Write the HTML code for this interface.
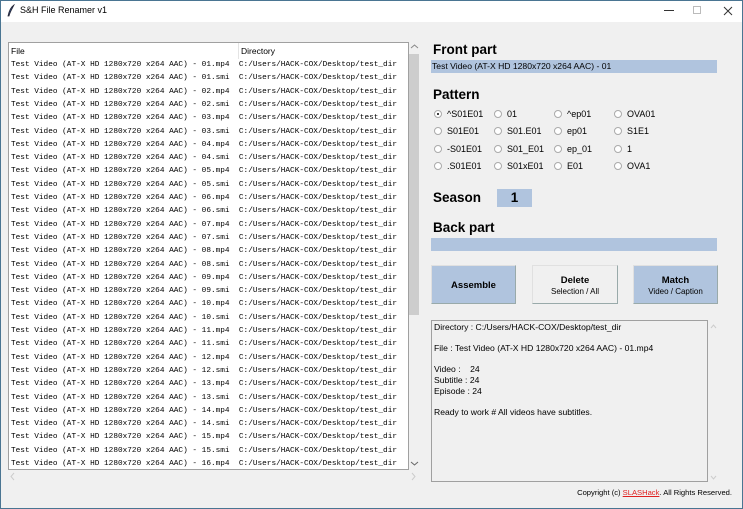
<!DOCTYPE html>
<html><head><meta charset="utf-8"><style>
*{margin:0;padding:0;box-sizing:border-box}
body{width:743px;height:509px;overflow:hidden;background:#f0f0f0;font-family:"Liberation Sans",sans-serif;position:relative}
.abs{position:absolute}
#frame{left:0;top:0;width:743px;height:509px;border:1px solid #4a7592;pointer-events:none}
#title{left:1px;top:1px;width:741px;height:21px;background:#fff}
#title .t{left:19px;top:4px;font-size:9px;color:#000}
#list{left:8px;top:42px;width:401px;height:428px;background:#fff;border:1px solid #a0a0a0;overflow:hidden}
.row{position:absolute;left:2px;font-family:"Liberation Mono",monospace;font-size:7.75px;color:#000;white-space:pre;line-height:10px}
.hdr{position:absolute;font-size:8.5px;top:3px;color:#000}
.lbl{font-weight:bold;font-size:13.5px;color:#000}
.ent{background:#b0c4de;height:13px}
.rad{font-size:9px;color:#000;white-space:pre}
.rad i{display:inline-block;width:8px;height:8px;border:1px solid #aaa;border-radius:50%;background:#fff;vertical-align:-1px;margin-right:5px;position:relative}
.rad i.on:after{content:"";position:absolute;left:2px;top:2px;width:2px;height:2px;background:#000;border-radius:50%}
.btn{border:1px solid #e0e0e0;border-right-color:#9aa;border-bottom-color:#9aa;text-align:center;font-size:9px}
.btn b{font-size:9.5px}
#txt{left:431px;top:320px;width:277px;height:162px;border:1px solid #a0a0a0;background:#f0f0f0;font-size:8.6px;line-height:10.6px;padding:1px 2px;white-space:pre}
</style></head><body>
<div id="title" class="abs">
<svg class="abs" style="left:5px;top:3px" width="10" height="14"><path d="M8 1 C5 3 3 7 2 12 L3 12 C4 8 6 5 8 1Z" fill="#3a5a8a" stroke="#223" stroke-width="0.8"/></svg>
<div class="abs t">S&amp;H File Renamer v1</div>
<div class="abs" style="left:663px;top:9px;width:10px;height:1px;background:#333"></div>
<div class="abs" style="left:692px;top:5px;width:8px;height:8px;border:1px solid #bbb"></div>
<svg class="abs" style="left:722px;top:5px" width="10" height="10"><path d="M1 1L9 9M9 1L1 9" stroke="#333" stroke-width="1"/></svg>
</div>
<div id="list" class="abs">
<div class="hdr" style="left:2px">File</div>
<div class="abs" style="left:229px;top:0;width:1px;height:16px;background:#e4e4e4"></div>
<div class="hdr" style="left:232px">Directory</div>
<div class="row" style="top:17px">Test Video (AT-X HD 1280x720 x264 AAC) - 01.mp4  C:/Users/HACK-COX/Desktop/test_dir</div>
<div class="row" style="top:30.3px">Test Video (AT-X HD 1280x720 x264 AAC) - 01.smi  C:/Users/HACK-COX/Desktop/test_dir</div>
<div class="row" style="top:43.6px">Test Video (AT-X HD 1280x720 x264 AAC) - 02.mp4  C:/Users/HACK-COX/Desktop/test_dir</div>
<div class="row" style="top:56.9px">Test Video (AT-X HD 1280x720 x264 AAC) - 02.smi  C:/Users/HACK-COX/Desktop/test_dir</div>
<div class="row" style="top:70.2px">Test Video (AT-X HD 1280x720 x264 AAC) - 03.mp4  C:/Users/HACK-COX/Desktop/test_dir</div>
<div class="row" style="top:83.5px">Test Video (AT-X HD 1280x720 x264 AAC) - 03.smi  C:/Users/HACK-COX/Desktop/test_dir</div>
<div class="row" style="top:96.8px">Test Video (AT-X HD 1280x720 x264 AAC) - 04.mp4  C:/Users/HACK-COX/Desktop/test_dir</div>
<div class="row" style="top:110.1px">Test Video (AT-X HD 1280x720 x264 AAC) - 04.smi  C:/Users/HACK-COX/Desktop/test_dir</div>
<div class="row" style="top:123.4px">Test Video (AT-X HD 1280x720 x264 AAC) - 05.mp4  C:/Users/HACK-COX/Desktop/test_dir</div>
<div class="row" style="top:136.7px">Test Video (AT-X HD 1280x720 x264 AAC) - 05.smi  C:/Users/HACK-COX/Desktop/test_dir</div>
<div class="row" style="top:150px">Test Video (AT-X HD 1280x720 x264 AAC) - 06.mp4  C:/Users/HACK-COX/Desktop/test_dir</div>
<div class="row" style="top:163.3px">Test Video (AT-X HD 1280x720 x264 AAC) - 06.smi  C:/Users/HACK-COX/Desktop/test_dir</div>
<div class="row" style="top:176.6px">Test Video (AT-X HD 1280x720 x264 AAC) - 07.mp4  C:/Users/HACK-COX/Desktop/test_dir</div>
<div class="row" style="top:189.9px">Test Video (AT-X HD 1280x720 x264 AAC) - 07.smi  C:/Users/HACK-COX/Desktop/test_dir</div>
<div class="row" style="top:203.2px">Test Video (AT-X HD 1280x720 x264 AAC) - 08.mp4  C:/Users/HACK-COX/Desktop/test_dir</div>
<div class="row" style="top:216.5px">Test Video (AT-X HD 1280x720 x264 AAC) - 08.smi  C:/Users/HACK-COX/Desktop/test_dir</div>
<div class="row" style="top:229.8px">Test Video (AT-X HD 1280x720 x264 AAC) - 09.mp4  C:/Users/HACK-COX/Desktop/test_dir</div>
<div class="row" style="top:243.1px">Test Video (AT-X HD 1280x720 x264 AAC) - 09.smi  C:/Users/HACK-COX/Desktop/test_dir</div>
<div class="row" style="top:256.4px">Test Video (AT-X HD 1280x720 x264 AAC) - 10.mp4  C:/Users/HACK-COX/Desktop/test_dir</div>
<div class="row" style="top:269.7px">Test Video (AT-X HD 1280x720 x264 AAC) - 10.smi  C:/Users/HACK-COX/Desktop/test_dir</div>
<div class="row" style="top:283px">Test Video (AT-X HD 1280x720 x264 AAC) - 11.mp4  C:/Users/HACK-COX/Desktop/test_dir</div>
<div class="row" style="top:296.3px">Test Video (AT-X HD 1280x720 x264 AAC) - 11.smi  C:/Users/HACK-COX/Desktop/test_dir</div>
<div class="row" style="top:309.6px">Test Video (AT-X HD 1280x720 x264 AAC) - 12.mp4  C:/Users/HACK-COX/Desktop/test_dir</div>
<div class="row" style="top:322.9px">Test Video (AT-X HD 1280x720 x264 AAC) - 12.smi  C:/Users/HACK-COX/Desktop/test_dir</div>
<div class="row" style="top:336.2px">Test Video (AT-X HD 1280x720 x264 AAC) - 13.mp4  C:/Users/HACK-COX/Desktop/test_dir</div>
<div class="row" style="top:349.5px">Test Video (AT-X HD 1280x720 x264 AAC) - 13.smi  C:/Users/HACK-COX/Desktop/test_dir</div>
<div class="row" style="top:362.8px">Test Video (AT-X HD 1280x720 x264 AAC) - 14.mp4  C:/Users/HACK-COX/Desktop/test_dir</div>
<div class="row" style="top:376.1px">Test Video (AT-X HD 1280x720 x264 AAC) - 14.smi  C:/Users/HACK-COX/Desktop/test_dir</div>
<div class="row" style="top:389.4px">Test Video (AT-X HD 1280x720 x264 AAC) - 15.mp4  C:/Users/HACK-COX/Desktop/test_dir</div>
<div class="row" style="top:402.7px">Test Video (AT-X HD 1280x720 x264 AAC) - 15.smi  C:/Users/HACK-COX/Desktop/test_dir</div>
<div class="row" style="top:416px">Test Video (AT-X HD 1280x720 x264 AAC) - 16.mp4  C:/Users/HACK-COX/Desktop/test_dir</div>
</div>
<svg class="abs" style="left:410px;top:44px" width="9" height="6"><path d="M1 4L4.5 1L8 4" stroke="#888" fill="none"/></svg>
<div class="abs" style="left:409px;top:54px;width:10px;height:261px;background:#cdcdcd"></div>
<svg class="abs" style="left:410px;top:461px" width="9" height="6"><path d="M1 1L4.5 4L8 1" stroke="#666" fill="none"/></svg>
<svg class="abs" style="left:10px;top:472px" width="6" height="9"><path d="M4 1L1 4.5L4 8" stroke="#ccc" fill="none"/></svg>
<svg class="abs" style="left:411px;top:472px" width="6" height="9"><path d="M1 1L4 4.5L1 8" stroke="#ccc" fill="none"/></svg>

<div class="abs lbl" style="left:433px;top:42px">Front part</div>
<div class="abs ent" style="left:431px;top:60px;width:286px;font-size:8.6px;line-height:13px;padding-left:1px">Test Video (AT-X HD 1280x720 x264 AAC) - 01</div>
<div class="abs lbl" style="left:433px;top:87px">Pattern</div>
<div class="abs rad" style="left:434px;top:109px"><i class="on"></i>^S01E01</div>
<div class="abs rad" style="left:494px;top:109px"><i></i>01</div>
<div class="abs rad" style="left:554px;top:109px"><i></i>^ep01</div>
<div class="abs rad" style="left:614px;top:109px"><i></i>OVA01</div>
<div class="abs rad" style="left:434px;top:126px"><i></i>S01E01</div>
<div class="abs rad" style="left:494px;top:126px"><i></i>S01.E01</div>
<div class="abs rad" style="left:554px;top:126px"><i></i>ep01</div>
<div class="abs rad" style="left:614px;top:126px"><i></i>S1E1</div>
<div class="abs rad" style="left:434px;top:144px"><i></i>-S01E01</div>
<div class="abs rad" style="left:494px;top:144px"><i></i>S01_E01</div>
<div class="abs rad" style="left:554px;top:144px"><i></i>ep_01</div>
<div class="abs rad" style="left:614px;top:144px"><i></i>1</div>
<div class="abs rad" style="left:434px;top:161px"><i></i>.S01E01</div>
<div class="abs rad" style="left:494px;top:161px"><i></i>S01xE01</div>
<div class="abs rad" style="left:554px;top:161px"><i></i>E01</div>
<div class="abs rad" style="left:614px;top:161px"><i></i>OVA1</div>
<div class="abs lbl" style="left:433px;top:190px">Season</div>
<div class="abs ent lbl" style="left:497px;top:189px;width:35px;height:18px;text-align:center;line-height:18px">1</div>
<div class="abs lbl" style="left:433px;top:220px">Back part</div>
<div class="abs ent" style="left:431px;top:238px;width:286px"></div>

<div class="abs btn" style="left:431px;top:265px;width:85px;height:39px;background:#b0c4de;line-height:39px"><b>Assemble</b></div>
<div class="abs btn" style="left:532px;top:265px;width:86px;height:39px;background:#f0f0f0;padding-top:9px;line-height:11px"><b>Delete</b><br><span style="font-size:8px">Selection / All</span></div>
<div class="abs btn" style="left:633px;top:265px;width:85px;height:39px;background:#b0c4de;padding-top:9px;line-height:11px"><b>Match</b><br><span style="font-size:8px">Video / Caption</span></div>

<div id="txt" class="abs">Directory : C:/Users/HACK-COX/Desktop/test_dir

File : Test Video (AT-X HD 1280x720 x264 AAC) - 01.mp4

Video :    24
Subtitle : 24
Episode : 24

Ready to work # All videos have subtitles.</div>
<svg class="abs" style="left:710px;top:324px" width="7" height="5"><path d="M1 4L3.5 1L6 4" stroke="#ccc" fill="none"/></svg>
<svg class="abs" style="left:710px;top:475px" width="7" height="5"><path d="M1 1L3.5 4L6 1" stroke="#ccc" fill="none"/></svg>
<div class="abs" style="right:11px;top:488px;font-size:7.6px;color:#000;white-space:pre">Copyright (c) <span style="color:#e02020;text-decoration:underline">SLASHack</span>. All Rights Reserved.</div>
<div id="frame" class="abs"></div>
</body></html>
